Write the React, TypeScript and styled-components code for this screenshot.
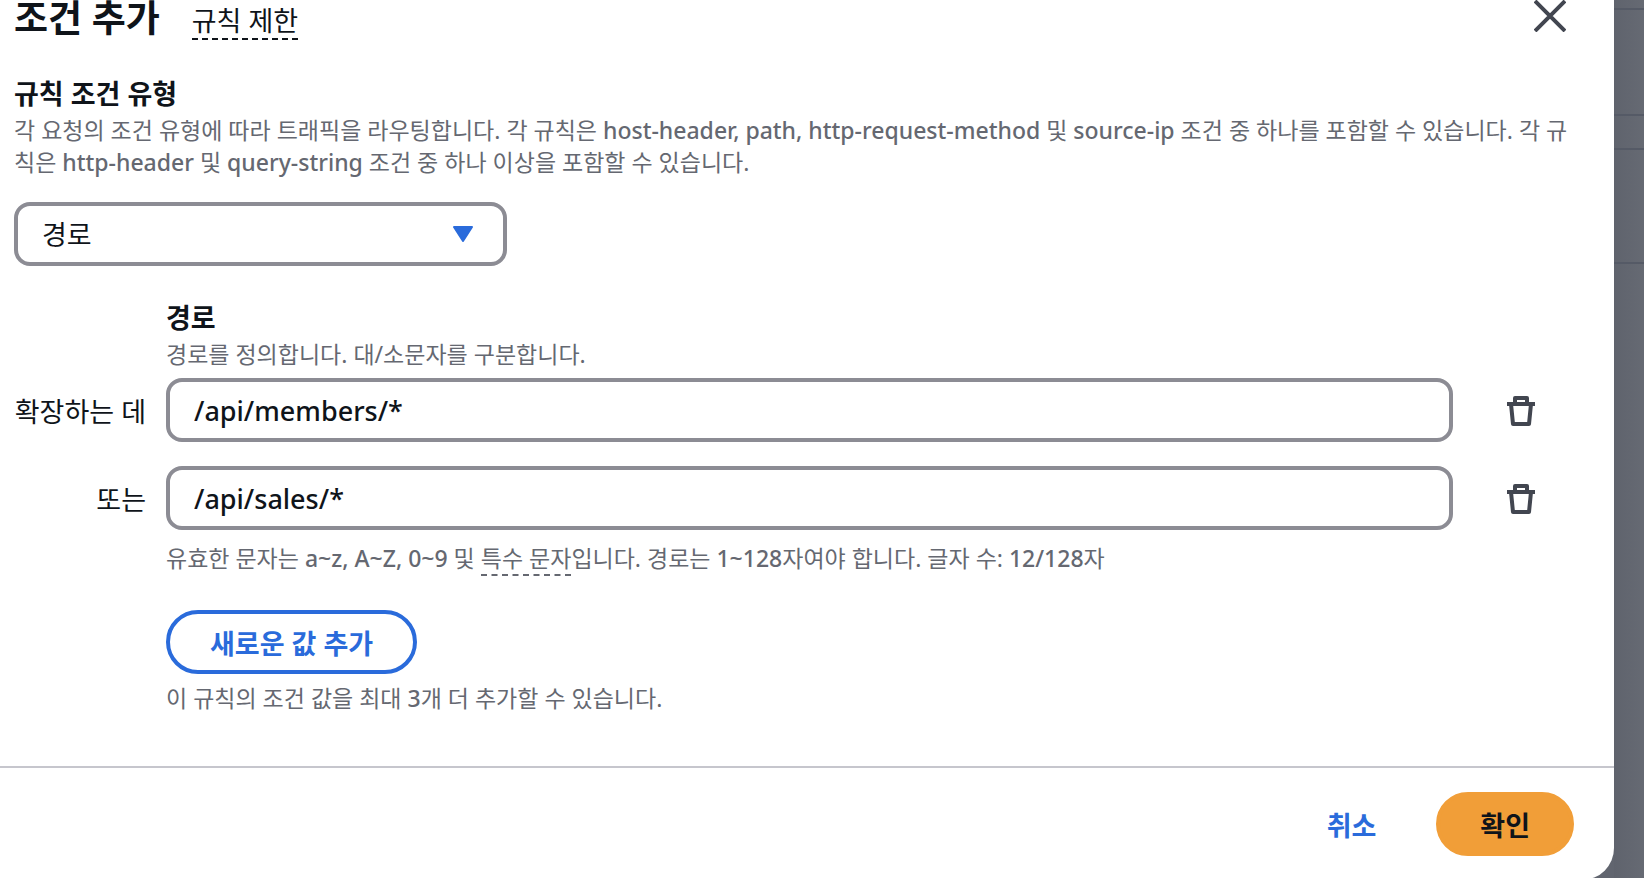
import React, { useState } from "react";
import styled, { createGlobalStyle, css } from "styled-components";

const GlobalStyle = createGlobalStyle`
  *, *::before, *::after { box-sizing: border-box; }
  html, body { margin: 0; overflow: hidden; background: #61656f; }
  body, button, input, select {
    font-family: "Noto Sans", "Noto Sans CJK KR", sans-serif;
    color: #0f141a;
  }
`;

const Screen = styled.main`
  display: flex;
  align-items: stretch;
  min-height: 100vh;
  background: #61656f;
`;

const Dialog = styled.form`
  flex: 1;
  min-width: 0;
  background: #ffffff;
  border-radius: 0 0 32px 0;
`;

const PageEdge = styled.div`
  flex: 0 0 30px;
  background: linear-gradient(90deg, #5f636d, #666a73);
`;

const PageRow = styled.div<{ $height: number }>`
  height: ${(p) => p.$height}px;
  border-bottom: 2px solid #555a66;
`;

const Header = styled.header`
  display: flex;
  align-items: flex-start;
  height: 74px;
  padding: 0 46px 0 14px;
`;

const Title = styled.h1`
  margin: 0 32px 0 0;
  font-size: 37px;
  line-height: 36px;
  font-weight: 700;
`;

const dashed = css`
  color: inherit;
  text-decoration: none;
  border-bottom: 2px dashed currentColor;
`;

const LimitLink = styled.a`
  ${dashed}
  padding-top: 4px;
  font-size: 27px;
  line-height: 34px;
`;

const InlineLink = styled.a`
  ${dashed}
`;

const CloseButton = styled.button`
  display: grid;
  place-items: center;
  width: 36px;
  height: 32px;
  margin-left: auto;
  padding: 0;
  border: 0;
  background: none;
`;

const Body = styled.div`
  padding: 0 40px 52px 14px;
`;

const FieldLabel = styled.label`
  display: block;
  font-size: 27px;
  line-height: 40px;
  font-weight: 700;
`;

const Hint = styled.p`
  margin: 0;
  font-size: 23px;
  line-height: 32px;
  color: #656871;
`;

const AddHint = styled(Hint)`
  margin-top: 8px;
`;

const Latin = styled.span`
  font-weight: 500;
`;

const control = css`
  display: block;
  width: 100%;
  height: 64px;
  padding: 0 24px;
  border: 4px solid #8c8c94;
  border-radius: 16px;
  background: #ffffff;
  font-size: 27px;
  outline: none;
`;

const SelectWrap = styled.div`
  position: relative;
  width: 493px;
  max-width: 100%;
  margin: 24px 0 32px;
`;

const Select = styled.select`
  ${control}
  appearance: none;
`;

const Caret = styled.svg`
  position: absolute;
  right: 34px;
  top: 24px;
  pointer-events: none;
`;

const Indent = styled.div`
  padding-left: 152px;
`;

const Rows = styled.div`
  display: grid;
  gap: 24px;
  margin: 8px 0 12px;
`;

const Row = styled.div`
  display: grid;
  grid-template-columns: 132px minmax(0, 1fr) 101px;
  column-gap: 20px;
  align-items: center;
`;

const RowLabel = styled.label`
  font-size: 27px;
  text-align: right;
  white-space: nowrap;
`;

const TextInput = styled.input`
  ${control}
  font-weight: 500;
`;

const RemoveButton = styled.button`
  display: grid;
  place-items: center;
  width: 64px;
  height: 64px;
  margin-left: 16px;
  padding: 0;
  border: 0;
  background: none;
`;

const AddBlock = styled.div`
  margin-top: 36px;
`;

type ActionKind = "outline" | "link" | "primary";

const borders: Record<ActionKind, string> = {
  outline: "#2a6bdb",
  link: "transparent",
  primary: "#f19e38",
};

const Action = styled.button<{ $kind: ActionKind }>`
  height: 64px;
  padding: 0 40px;
  border-radius: 32px;
  border: 4px solid ${(p) => borders[p.$kind]};
  background: ${(p) => (p.$kind === "primary" ? "#f19e38" : "transparent")};
  color: ${(p) => (p.$kind === "primary" ? "#0f141a" : "#2a6bdb")};
  font-size: 27px;
  font-weight: 700;
`;

const Footer = styled.footer`
  display: flex;
  justify-content: flex-end;
  gap: 16px;
  padding: 24px 40px;
  border-top: 2px solid #c6c6cd;
`;

const TrashIcon = () => (
  <svg width="32" height="32" viewBox="0 0 32 32" fill="none" stroke="#424650" strokeWidth="4" aria-hidden="true">
    <path d="M2 10H30" />
    <path d="M10 10V4H22V10" strokeLinejoin="round" />
    <path d="M6 10L8 30H24L26 10" strokeLinejoin="round" />
  </svg>
);

const CloseIcon = () => (
  <svg width="32" height="32" viewBox="0 0 32 32" stroke="#424650" strokeWidth="4" aria-hidden="true">
    <path d="M1 1L31 31M31 1L1 31" />
  </svg>
);

export default function App() {
  const [values, setValues] = useState([
    { label: "확장하는 데", value: "/api/members/*" },
    { label: "또는", value: "/api/sales/*" },
  ]);
  const update = (index: number, value: string) =>
    setValues(values.map((item, i) => (i === index ? { ...item, value } : item)));

  return (
    <Screen lang="ko">
      <GlobalStyle />
      <Dialog onSubmit={(e) => e.preventDefault()}>
        <Header>
          <Title>조건 추가</Title>
          <LimitLink href="#limits">규칙 제한</LimitLink>
          <CloseButton type="button" aria-label="닫기">
            <CloseIcon />
          </CloseButton>
        </Header>
        <Body>
          <FieldLabel htmlFor="condition-type">규칙 조건 유형</FieldLabel>
          <Hint>
            각 요청의 조건 유형에 따라 트래픽을 라우팅합니다. 각 규칙은{" "}
            <Latin>host-header, path, http-request-method</Latin> 및 <Latin>source-ip</Latin> 조건 중 하나를 포함할 수
            있습니다. 각 규칙은 <Latin>http-header</Latin> 및 <Latin>query-string</Latin> 조건 중 하나 이상을 포함할 수
            있습니다.
          </Hint>
          <SelectWrap>
            <Select id="condition-type" defaultValue="path">
              <option value="path">경로</option>
            </Select>
            <Caret width="20" height="16" viewBox="0 0 20 16" aria-hidden="true">
              <path d="M1 1H19L10 15Z" fill="#2a6bdb" stroke="#2a6bdb" strokeWidth="2" strokeLinejoin="round" />
            </Caret>
          </SelectWrap>
          <Indent>
            <FieldLabel htmlFor="value-0">경로</FieldLabel>
            <Hint>경로를 정의합니다. 대/소문자를 구분합니다.</Hint>
          </Indent>
          <Rows>
            {values.map((item, index) => (
              <Row key={item.label}>
                <RowLabel htmlFor={`value-${index}`}>{item.label}</RowLabel>
                <TextInput
                  id={`value-${index}`}
                  value={item.value}
                  onChange={(e) => update(index, e.target.value)}
                />
                <RemoveButton type="button" aria-label={`${item.value} 제거`}>
                  <TrashIcon />
                </RemoveButton>
              </Row>
            ))}
          </Rows>
          <Indent>
            <Hint>
              유효한 문자는 <Latin>a~z, A~Z, 0~9</Latin> 및 <InlineLink href="#characters">특수 문자</InlineLink>입니다.
              경로는 <Latin>1~128</Latin>자여야 합니다. 글자 수: <Latin>12/128</Latin>자
            </Hint>
            <AddBlock>
              <Action type="button" $kind="outline">새로운 값 추가</Action>
              <AddHint>
                이 규칙의 조건 값을 최대 <Latin>3</Latin>개 더 추가할 수 있습니다.
              </AddHint>
            </AddBlock>
          </Indent>
        </Body>
        <Footer>
          <Action type="button" $kind="link">취소</Action>
          <Action type="submit" $kind="primary">확인</Action>
        </Footer>
      </Dialog>
      <PageEdge>
        <PageRow $height={10} />
        <PageRow $height={106} />
        <PageRow $height={34} />
        <PageRow $height={114} />
      </PageEdge>
    </Screen>
  );
}
